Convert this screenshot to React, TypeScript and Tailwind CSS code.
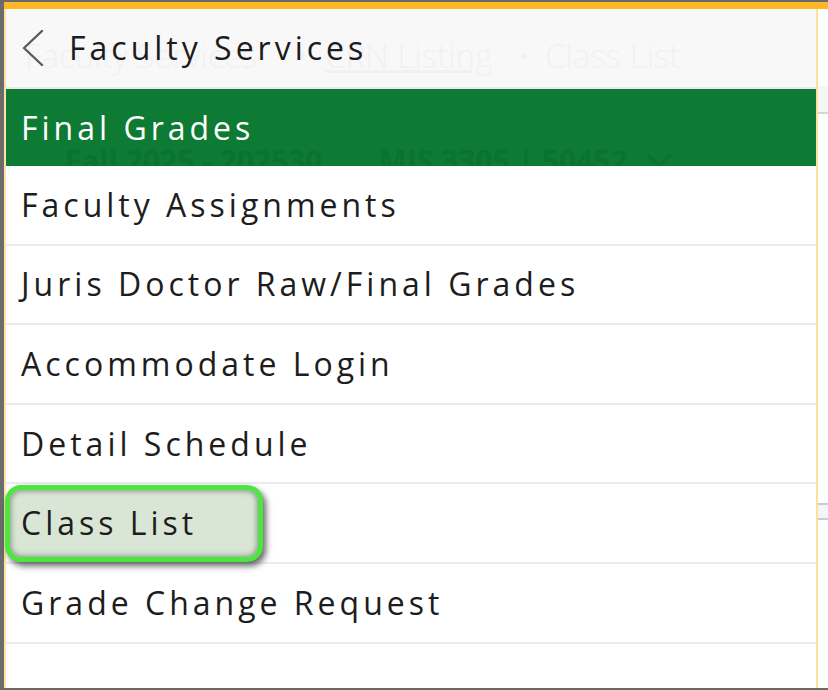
import React from "react";

const items = [
  "Faculty Assignments",
  "Juris Doctor Raw/Final Grades",
  "Accommodate Login",
  "Detail Schedule",
  "Class List",
  "Grade Change Request",
];

export default function App() {
  return (
    <div className="w-[828px] h-[690px] flex flex-col bg-white overflow-hidden font-['Open_Sans',sans-serif]">
      <div className="h-[2px] bg-[#6b6b6b]" />
      <div className="flex flex-1">
        <div className="w-[4px] bg-[#6b6b6b]" />
        <div className="flex-1 flex flex-col">
          <div className="h-[7px] bg-[#fdb827]" />
          <div className="flex flex-1">
            <div className="w-[2px] bg-[#ffe2a2]" />

            {/* Menu panel */}
            <div className="w-[810px] flex flex-col bg-white">
              {/* Header, with the page behind faintly showing */}
              <div className="relative h-[80px] shrink-0 flex items-center bg-[#f8f8f8] border-b-2 border-[#e9e9ee] overflow-hidden">
                <div className="absolute inset-0 text-[33px] font-light text-[#f1f1f1] whitespace-nowrap leading-none">
                  <span className="absolute left-[19px] top-[30px]">Faculty Services</span>
                  <span className="absolute left-[290px] top-[30px]">•</span>
                  <span className="absolute left-[319px] top-[30px] underline">CRN Listing</span>
                  <span className="absolute left-[512px] top-[30px]">•</span>
                  <span className="absolute left-[539px] top-[30px]">Class List</span>
                </div>
                <svg className="relative ml-[16px]" width="22" height="36" viewBox="0 0 22 36" fill="none">
                  <polyline points="20,1 2,18 20,35" stroke="#525c64" strokeWidth="2.4" strokeLinecap="round" strokeLinejoin="round" />
                </svg>
                <span className="relative ml-[25px] text-[32px] tracking-[4px] text-[#1c1c1c] leading-none">
                  Faculty Services
                </span>
              </div>

              {/* Active item */}
              <div className="relative h-[77px] shrink-0 flex items-center bg-[#0e7b34] overflow-hidden">
                <div className="absolute left-[59px] top-[57px] flex items-center gap-[56px] text-[30px] font-bold text-[#0c7230] whitespace-nowrap leading-none">
                  <span>Fall 2025 - 202530</span>
                  <span className="flex items-center gap-[18px]">
                    MIS 3305 | 50452
                    <svg width="26" height="16" viewBox="0 0 26 16" fill="none">
                      <polyline points="2,2 13,13 24,2" stroke="#0c7230" strokeWidth="4" />
                    </svg>
                  </span>
                </div>
                <span className="relative pl-[15px] text-[32px] tracking-[4px] text-white leading-none">
                  Final Grades
                </span>
              </div>

              {items.map((label) => (
                <div
                  key={label}
                  className="relative h-[79.6px] shrink-0 flex items-center border-b-2 border-[#ececec]"
                >
                  {label === "Class List" && (
                    <div className="absolute left-[-1px] top-[1px] w-[258px] h-[77px] rounded-[16px] border-[5px] border-[#4de640] bg-[#d9e6d6] shadow-[inset_0_0_6px_rgba(0,0,0,0.5),3px_4px_6px_rgba(0,0,0,0.6)]" />
                  )}
                  <span className="relative pl-[15px] text-[32px] tracking-[4px] text-[#1d1d1d] leading-none">
                    {label}
                  </span>
                </div>
              ))}
              <div className="flex-1" />
            </div>

            <div className="w-[2px] bg-[#ffe09a]" />
            <div className="flex-1 flex flex-col">
              <div className="mt-[77px] h-[28px] bg-[#f5f6f6] border-b-2 border-[#d6d6d6]" />
              <div className="mt-[389px] h-[17px] bg-[#f3f5f7] border-y-2 border-[#c2ceda]" />
            </div>
          </div>
        </div>
      </div>
      <div className="h-[2px] bg-[#6b6b6b]" />
    </div>
  );
}
